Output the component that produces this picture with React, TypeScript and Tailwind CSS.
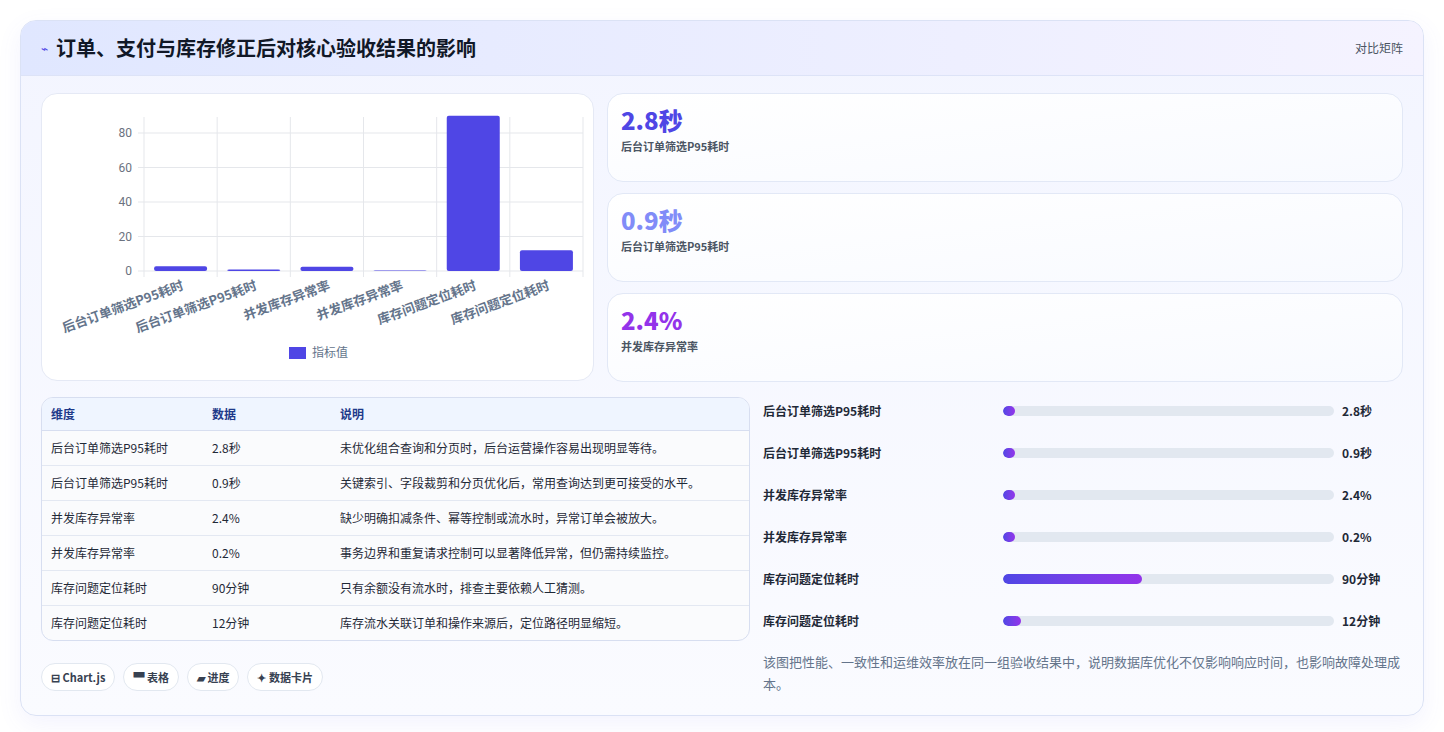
const font = { fontFamily: '"Noto Sans CJK SC", "Noto Sans", sans-serif' };

const rows = [
  { name: "后台订单筛选P95耗时", value: "2.8秒", num: 2.8, note: "未优化组合查询和分页时，后台运营操作容易出现明显等待。", w: "w-[3.6%]" },
  { name: "后台订单筛选P95耗时", value: "0.9秒", num: 0.9, note: "关键索引、字段裁剪和分页优化后，常用查询达到更可接受的水平。", w: "w-[3.6%]" },
  { name: "并发库存异常率", value: "2.4%", num: 2.4, note: "缺少明确扣减条件、幂等控制或流水时，异常订单会被放大。", w: "w-[3.6%]" },
  { name: "并发库存异常率", value: "0.2%", num: 0.2, note: "事务边界和重复请求控制可以显著降低异常，但仍需持续监控。", w: "w-[3.6%]" },
  { name: "库存问题定位耗时", value: "90分钟", num: 90, note: "只有余额没有流水时，排查主要依赖人工猜测。", w: "w-[42%]" },
  { name: "库存问题定位耗时", value: "12分钟", num: 12, note: "库存流水关联订单和操作来源后，定位路径明显缩短。", w: "w-[5.5%]" },
];

function Chart() {
  const x0 = 102, x1 = 541, y0 = 177, py = 1.725;
  const cw = (x1 - x0) / 6;
  return (
    <svg width="553" height="288" viewBox="0 0 553 288" className="block">
      {[0, 20, 40, 60, 80].map((t) => (
        <g key={t}>
          <line x1={x0 - 6} x2={x1} y1={y0 - t * py} y2={y0 - t * py} stroke="#e5e7eb" />
          <text x={x0 - 12} y={y0 - t * py + 4} textAnchor="end" fontSize="12" fill="#6b7280" fontFamily="Roboto, sans-serif">{t}</text>
        </g>
      ))}
      {Array.from({ length: 7 }).map((_, i) => (
        <line key={i} x1={x0 + i * cw} x2={x0 + i * cw} y1={23} y2={y0 + 6} stroke="#e5e7eb" />
      ))}
      {rows.map((r, i) => {
        const h = Math.max(r.num * py, 0.5);
        const cx = x0 + i * cw + cw / 2;
        return (
          <g key={i}>
            <rect x={cx - 26.5} y={y0 - h} width="53" height={h} rx="2" fill="#4f46e5" />
            <text transform={`translate(${cx + 4},${y0 + 18}) rotate(-20)`} textAnchor="end" fontSize="13" fontWeight="600" fill="#64748b" style={font}>{r.name}</text>
          </g>
        );
      })}
      <rect x="247" y="253" width="17" height="12" fill="#4f46e5" />
      <text x="270" y="263" fontSize="12" fill="#64748b" style={font}>指标值</text>
    </svg>
  );
}

export default function App() {
  return (
    <div className="min-h-screen bg-white p-5" style={font}>
      <div className="rounded-2xl border border-[#dbe2f5] bg-gradient-to-b from-[#f3f5ff] to-[#fafbff] overflow-hidden shadow-[0_8px_24px_rgba(99,102,241,0.08)]">
        <div className="h-[55px] flex items-center justify-between px-5 bg-gradient-to-r from-[#e0e7ff] to-[#f5f3ff] border-b border-[#dde3f7]">
          <div className="flex items-center gap-2">
            <span className="text-[#4f46e5] text-xs">⌁</span>
            <h1 className="text-[20px] font-bold text-[#111827]">订单、支付与库存修正后对核心验收结果的影响</h1>
          </div>
          <span className="text-xs text-[#4b5563]">对比矩阵</span>
        </div>
        <div className="p-5 pt-[17px] flex flex-col gap-[15px]">
          <div className="flex gap-[13px]">
            <div className="w-[553px] h-[288px] rounded-2xl bg-white border border-[#e5e9f5]">
              <Chart />
            </div>
            <div className="flex-1 flex flex-col gap-[11px]">
              {[
                { v: "2.8秒", l: "后台订单筛选P95耗时", c: "text-[#4f46e5]" },
                { v: "0.9秒", l: "后台订单筛选P95耗时", c: "text-[#818cf8]" },
                { v: "2.4%", l: "并发库存异常率", c: "text-[#9333ea]" },
              ].map((s, i) => (
                <div key={i} className="h-[89px] rounded-2xl border border-[#e2e8f6] bg-gradient-to-br from-white to-[#f8faff] px-[13px] pt-[9px]">
                  <div className={`text-[24px] font-extrabold leading-[34px] ${s.c}`}>{s.v}</div>
                  <div className="text-[11px] font-semibold text-[#4b5563] mt-[1px]">{s.l}</div>
                </div>
              ))}
            </div>
          </div>
          <div className="flex gap-[13px]">
            <div className="w-[709px] flex flex-col">
              <div className="rounded-xl border border-[#d7def0] overflow-hidden bg-[#fafbfd]">
                <table className="w-full text-[12px] text-[#1f2937]">
                  <thead>
                    <tr className="bg-[#eff5ff] text-[#1e3a8a] font-bold h-[32px] border-b border-[#d7def0]">
                      <th className="text-left font-bold pl-[9px] w-[170px]">维度</th>
                      <th className="text-left font-bold w-[128px]">数据</th>
                      <th className="text-left font-bold">说明</th>
                    </tr>
                  </thead>
                  <tbody>
                    {rows.map((r, i) => (
                      <tr key={i} className={`h-[35px] ${i < 5 ? "border-b border-[#e3e8f2]" : ""}`}>
                        <td className="pl-[9px]">{r.name}</td>
                        <td>{r.value}</td>
                        <td>{r.note}</td>
                      </tr>
                    ))}
                  </tbody>
                </table>
              </div>
              <div className="flex gap-2 mt-[22px]">
                {["⊟ Chart.js", "▀ 表格", "▰ 进度", "✦ 数据卡片"].map((p) => (
                  <span key={p} className="h-[28px] px-[9px] flex items-center rounded-full border border-[#e2e8f0] bg-white text-[11px] font-semibold text-[#374151]">{p}</span>
                ))}
              </div>
            </div>
            <div className="flex-1 flex flex-col -mt-[7px]">
              {rows.map((r, i) => (
                <div key={i} className="h-[42px] flex items-center text-[12px] font-semibold text-[#1f2937]">
                  <span className="w-[240px]">{r.name}</span>
                  <div className="w-[331px] h-[10px] rounded-full bg-[#e2e8f0] overflow-hidden">
                    <div className={`h-full rounded-full min-w-[12px] bg-gradient-to-r from-[#4f46e5] to-[#9333ea] ${r.w}`} />
                  </div>
                  <span className="ml-2 font-bold">{r.value}</span>
                </div>
              ))}
              <p className="mt-[9px] text-[13px] leading-[22px] text-[#64748b] -mr-2">该图把性能、一致性和运维效率放在同一组验收结果中，说明数据库优化不仅影响响应时间，也影响故障处理成本。</p>
            </div>
          </div>
        </div>
      </div>
    </div>
  );
}
